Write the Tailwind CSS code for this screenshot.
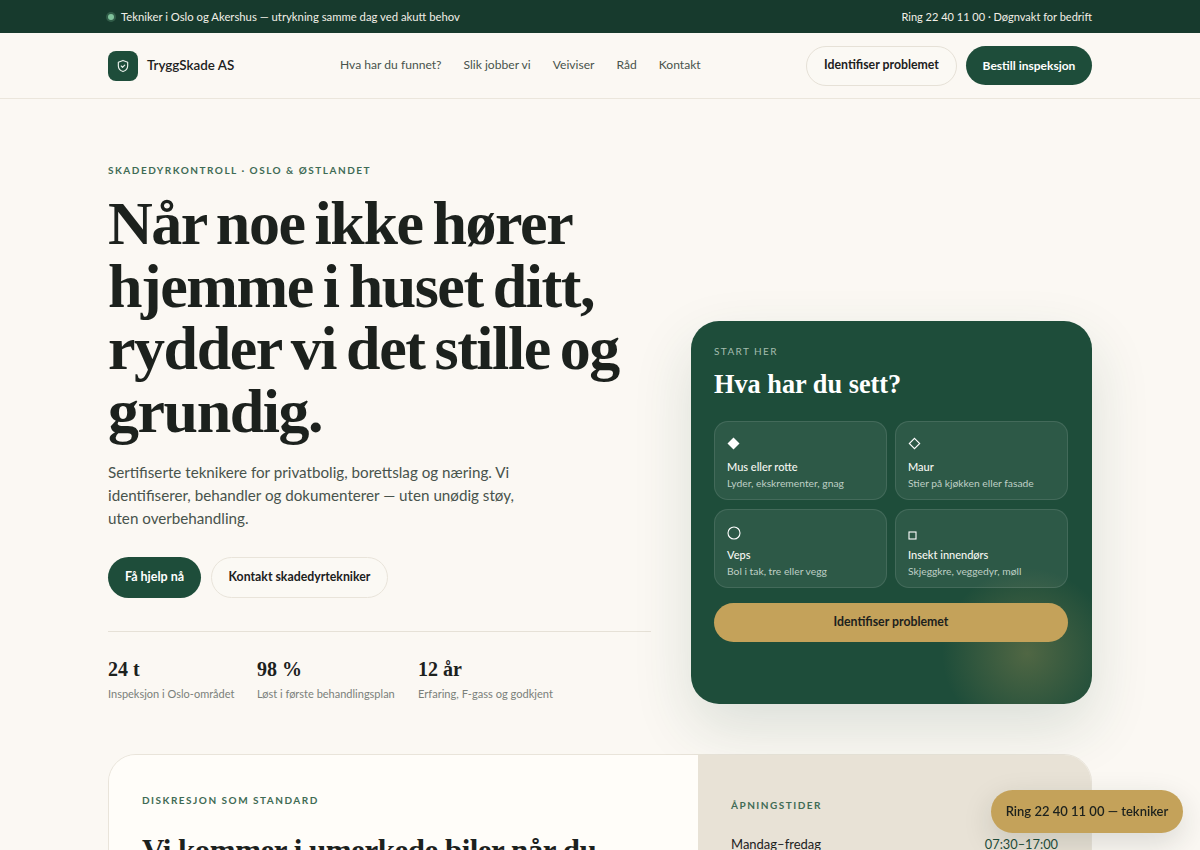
<!doctype html>
<html lang="nb">
  <head>
    <meta charset="UTF-8" />
    <title>TryggSkade AS</title>
    <script src="https://cdn.jsdelivr.net/npm/@tailwindcss/browser@4"></script>
  </head>
  <body class="h-[850px] overflow-hidden bg-[#fbf8f3] font-['Lato','Liberation_Sans',sans-serif] text-[#1c211d]">
    <div class="h-[33px] bg-[#173a2d] pt-px text-[#f2efe7]">
      <div class="mx-auto flex h-full w-[984px] items-center justify-between">
        <div class="flex items-center gap-[7px] text-[11.3px]">
          <span class="h-[6px] w-[6px] rounded-full bg-[#7fc29b] ring-2 ring-[#7fc29b]/25"></span>
          <span>Tekniker i Oslo og Akershus — utrykning samme dag ved akutt behov</span>
        </div>
        <span class="text-[11px]">Ring 22 40 11 00 · Døgnvakt for bedrift</span>
      </div>
    </div>

    <header class="h-[66px] border-b border-[#ebe6dc]">
      <div class="mx-auto flex h-full w-[984px] items-center">
        <div class="flex w-[232px] items-center gap-[9px]">
          <div class="flex h-[30px] w-[30px] items-center justify-center rounded-lg bg-[#1e4d3a]">
            <svg width="14" height="14" viewBox="0 0 24 24" fill="none" stroke="#e9f0ea" stroke-width="2" stroke-linecap="round" stroke-linejoin="round">
              <path d="M12 2.500l8 3v6c0 5-3.400 8.500-8 10-4.600-1.500-8-5-8-10v-6z" />
              <path d="M9 12l2.200 2.200L15 10.500" />
            </svg>
          </div>
          <span class="text-[13.4px] font-semibold">TryggSkade AS</span>
        </div>
        <nav class="flex gap-[22px] text-[12.1px] text-[#48534c]">
          <a>Hva har du funnet?</a>
          <a>Slik jobber vi</a>
          <a>Veiviser</a>
          <a>Råd</a>
          <a>Kontakt</a>
        </nav>
        <div class="ml-auto flex items-center gap-[9px] font-bold">
          <a class="flex h-[40px] w-[151px] items-center justify-center rounded-full border border-[#e6e1d7] bg-[#fbf9f4] text-[12.3px]">Identifiser problemet</a>
          <a class="flex h-[39px] w-[126px] items-center justify-center rounded-full bg-[#1e4d3a] text-[12px] text-white">Bestill inspeksjon</a>
        </div>
      </div>
    </header>

    <main class="mx-auto w-[984px]">
      <section class="flex items-end justify-between pt-[64px]">
        <div class="w-[543px] pb-px">
          <p class="text-[10px] font-bold tracking-[1.5px] text-[#3f6b55]">SKADEDYRKONTROLL · OSLO &amp; ØSTLANDET</p>
          <h1 class="mt-[14px] font-['Liberation_Serif',serif] text-[62px] leading-[62.5px] font-bold tracking-[-1.45px] [word-spacing:-4px]">Når noe ikke hører hjemme i huset ditt, rydder vi det stille og grundig.</h1>
          <p class="mt-[19px] w-[415px] text-[15.2px] leading-[23px] text-[#48534c]">Sertifiserte teknikere for privatbolig, borettslag og næring. Vi identifiserer, behandler og dokumenterer — uten unødig støy, uten overbehandling.</p>
          <div class="mt-[27px] flex gap-[10px] font-bold">
            <a class="flex h-[41px] w-[93px] items-center justify-center rounded-full bg-[#1e4d3a] text-[12.5px] text-white">Få hjelp nå</a>
            <a class="flex h-[41px] w-[177px] items-center justify-center rounded-full border border-[#e9e4da] bg-[#fbf9f4] text-[12.3px]">Kontakt skadedyrtekniker</a>
          </div>
          <div class="mt-[33px] flex gap-[23px] border-t border-[#e6e1d7] pt-[25px]">
            <div class="w-[126px] whitespace-nowrap">
              <p class="font-['Liberation_Serif',serif] text-[20px] leading-[24px] font-bold">24 t</p>
              <p class="mt-[5px] text-[11px] text-[#7a807a]">Inspeksjon i Oslo-området</p>
            </div>
            <div class="w-[138px] whitespace-nowrap">
              <p class="font-['Liberation_Serif',serif] text-[20px] leading-[24px] font-bold">98 %</p>
              <p class="mt-[5px] text-[11px] text-[#7a807a]">Løst i første behandlingsplan</p>
            </div>
            <div class="whitespace-nowrap">
              <p class="font-['Liberation_Serif',serif] text-[20px] leading-[24px] font-bold">12 år</p>
              <p class="mt-[5px] text-[11.1px] text-[#7a807a]">Erfaring, F-gass og godkjent</p>
            </div>
          </div>
        </div>

        <div class="h-[383px] w-[401px] rounded-[28px] bg-[#1e4d3a] bg-[radial-gradient(circle_85px_at_336px_332px,rgba(196,162,90,0.3),transparent)] pl-[23px] pr-[24px] pt-[23px] text-white shadow-[0_24px_60px_rgba(31,79,59,0.14)]">
          <p class="text-[10px] tracking-[0.14em] text-[#a3bcae]">START HER</p>
          <h2 class="mt-[10px] font-['Liberation_Serif',serif] text-[26.3px] leading-[32px] font-bold">Hva har du sett?</h2>
          <div class="mt-[20px] grid grid-cols-2 gap-x-[8px] gap-y-[9px]">
            <div class="h-[79px] rounded-[14px] border border-white/10 bg-white/7 pl-[12px] pt-[14px]">
              <div class="flex h-[15px] items-center">
                <svg width="13" height="13" viewBox="0 0 13 13"><path d="M6.500 0.500L12.500 6.500L6.500 12.500L0.500 6.500Z" fill="#fff" /></svg>
              </div>
              <p class="mt-[8px] text-[11px] font-medium leading-[15px] text-[#f6f7f2]">Mus eller rotte</p>
              <p class="mt-[3px] text-[10.3px] leading-[13px] text-[#bfcfc5]">Lyder, ekskrementer, gnag</p>
            </div>
            <div class="h-[79px] rounded-[14px] border border-white/10 bg-white/7 pl-[12px] pt-[14px]">
              <div class="flex h-[15px] items-center">
                <svg width="13" height="13" viewBox="0 0 13 13"><path d="M6.500 1.300L11.700 6.500L6.500 11.700L1.300 6.500Z" fill="none" stroke="#fff" stroke-width="1.100" /></svg>
              </div>
              <p class="mt-[8px] text-[11px] font-medium leading-[15px] text-[#f6f7f2]">Maur</p>
              <p class="mt-[3px] text-[10.3px] leading-[13px] text-[#bfcfc5]">Stier på kjøkken eller fasade</p>
            </div>
            <div class="h-[79px] rounded-[14px] border border-white/10 bg-white/7 pl-[12px] pt-[16px]">
              <div class="flex h-[15px] items-center">
                <svg width="14" height="14" viewBox="0 0 14 14"><circle cx="7" cy="7" r="6" fill="none" stroke="#fff" stroke-width="1.100" /></svg>
              </div>
              <p class="mt-[6px] text-[11px] font-medium leading-[15px] text-[#f6f7f2]">Veps</p>
              <p class="mt-[3px] text-[10.3px] leading-[13px] text-[#bfcfc5]">Bol i tak, tre eller vegg</p>
            </div>
            <div class="h-[79px] rounded-[14px] border border-white/10 bg-white/7 pl-[12px] pt-[16px]">
              <div class="flex h-[15px] items-center">
                <svg width="13" height="13" viewBox="0 0 13 13"><rect x="1" y="5" width="7" height="7" fill="none" stroke="#fff" stroke-width="1.100" /></svg>
              </div>
              <p class="mt-[6px] text-[11px] font-medium leading-[15px] text-[#f6f7f2]">Insekt innendørs</p>
              <p class="mt-[3px] text-[10.3px] leading-[13px] text-[#bfcfc5]">Skjeggkre, veggedyr, møll</p>
            </div>
          </div>
          <a class="mt-[15px] flex h-[39px] items-center justify-center rounded-full bg-[#c4a25a] text-[12.3px] font-bold text-[#1c211d]">Identifiser problemet</a>
        </div>
      </section>

      <section class="mt-[50px] flex h-[300px] overflow-hidden rounded-[28px] border border-[#e9e4da]">
        <div class="w-[589px] bg-[#fffdf9] pl-[33px] pt-[38px]">
          <p class="text-[10px] font-bold tracking-[1.5px] text-[#3f6b55]">DISKRESJON SOM STANDARD</p>
          <h2 class="mt-[24px] w-[480px] font-['Liberation_Serif',serif] text-[31px] leading-[38px] font-bold tracking-[-0.5px]">Vi kommer i umerkede biler når du ønsker det.</h2>
        </div>
        <div class="flex-1 bg-[#e8e2d6] px-[33px] pt-[43px]">
          <p class="text-[10px] font-bold tracking-[1.5px] text-[#3f6b55]">ÅPNINGSTIDER</p>
          <div class="mt-[22px] flex justify-between text-[13px]">
            <span>Mandag–fredag</span>
            <span class="text-[12.8px] text-[#1e4d3a]">07:30–17:00</span>
          </div>
        </div>
      </section>
    </main>

    <a class="fixed bottom-[17px] right-[17px] flex h-[43px] w-[192px] items-center justify-center rounded-full bg-[#c4a25a] text-[13px] font-semibold text-[#1c211d] shadow-[0_10px_30px_rgba(28,38,32,0.15)]">Ring 22 40 11 00 — tekniker</a>
  </body>
</html>
